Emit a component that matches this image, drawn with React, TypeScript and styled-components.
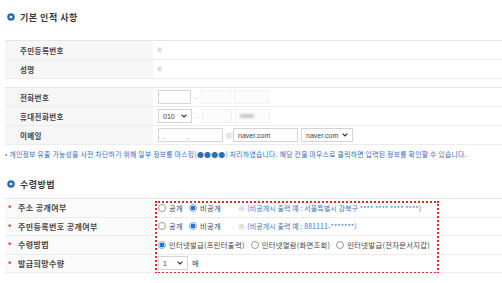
import styled, { createGlobalStyle } from 'styled-components';

const Global = createGlobalStyle`
  body {
    margin: 0;
    background: #ffffff;
    font-family: "Noto Sans CJK KR", "Noto Sans", sans-serif;
    color: #333333;
  }
`;

const Page = styled.div`
  padding: 10px 0 0 5px;
`;

const Heading = styled.h2<{ mt?: number }>`
  display: flex;
  align-items: center;
  gap: 5px;
  height: 14px;
  margin: ${(p) => p.mt || 0}px 0 0 2px;
  font-size: 9px;
  font-weight: 700;
  color: #3a3a3a;
  letter-spacing: 0.5px;
`;

const Table = styled.div<{ mt: number }>`
  position: relative;
  margin-top: ${(p) => p.mt}px;
  border-top: 1px solid #e6e6e6;
`;

const Row = styled.div<{ h: number }>`
  display: grid;
  grid-template-columns: 148px 1fr;
  height: ${(p) => p.h}px;
`;

const Label = styled.div<{ bg?: string; strong?: boolean }>`
  display: flex;
  align-items: center;
  gap: 5px;
  padding-left: ${(p) => (p.strong ? 2 : 15)}px;
  background: ${(p) => p.bg || '#f6f6f6'};
  border-bottom: 1px solid #ececec;
  font-size: ${(p) => (p.strong ? 8 : 7.5)}px;
  font-weight: ${(p) => (p.strong ? 700 : 600)};
  color: #444444;
  letter-spacing: 0.4px;
`;

const Star = styled.span`
  color: #e0342c;
  font-size: 8px;
  width: 6px;
  text-align: center;
`;

const Value = styled.div<{ gap?: number }>`
  display: flex;
  align-items: center;
  gap: ${(p) => p.gap ?? 4}px;
  padding-left: 5px;
  border-bottom: 1px solid #ececec;
  font-size: 7.3px;
  letter-spacing: 0.3px;
  color: #444444;
`;

const Input = styled.div<{ w: number; faint?: boolean }>`
  box-sizing: border-box;
  display: flex;
  align-items: center;
  width: ${(p) => p.w}px;
  height: 14px;
  padding: 0 4px;
  border: 1px solid ${(p) => (p.faint ? '#f1f1f1' : '#d4d4d4')};
  background: ${(p) => (p.faint ? '#fcfcfc' : '#ffffff')};
  font-family: "Liberation Sans", Arial, sans-serif;
  font-size: 7px;
  letter-spacing: 0;
  color: #444444;
`;

const Select = styled(Input)`
  justify-content: space-between;
`;

const Dash = styled.span`
  color: #bbbbbb;
  font-size: 7px;
  width: 4px;
  text-align: center;
`;

const Blur = styled.span<{ w: number }>`
  display: inline-block;
  width: ${(p) => p.w}px;
  height: 4px;
  background: #c9c9c9;
  filter: blur(1px);
`;

const Notice = styled.p`
  margin: 5px 0 0;
  font-size: 6.8px;
  line-height: 9px;
  color: #2f6db5;
  letter-spacing: 0.3px;
  white-space: nowrap;
`;

const Radio = styled.span<{ on?: boolean }>`
  box-sizing: border-box;
  display: inline-block;
  width: 8px;
  height: 8px;
  border-radius: 50%;
  border: 1px solid ${(p) => (p.on ? '#7aa9df' : '#9a9a9a')};
  background: ${(p) => (p.on ? 'radial-gradient(circle, #2d72c8 0 2.3px, #ffffff 2.6px)' : '#ffffff')};
  margin-right: 3px;
`;

const Option = styled.label`
  display: inline-flex;
  align-items: center;
  margin-right: 6px;
`;

const Hint = styled.span`
  margin-left: 11px;
  color: #3b78bd;
  font-size: 7px;
  letter-spacing: 0.1px;
  white-space: nowrap;
  & b {
    color: #a8a8a8;
    font-weight: 400;
    margin-right: 2px;
  }
`;

const Marker = styled.div`
  position: absolute;
  left: 150px;
  top: 2px;
  width: 284px;
  height: 73px;
  box-sizing: border-box;
  border: 2px dotted #e3262b;
  pointer-events: none;
`;

const Dot = () => (
  <svg width="8" height="8" viewBox="0 0 8 8">
    <circle cx="4" cy="4" r="3.8" fill="#2b6cb8" />
    <circle cx="4" cy="4" r="1.3" fill="#ffffff" />
  </svg>
);

const Chevron = () => (
  <svg width="6" height="4" viewBox="0 0 6 4">
    <path d="M0.6 0.6 L3 3 L5.4 0.6" stroke="#333" strokeWidth="1.2" fill="none" />
  </svg>
);

const App = (): JSX.Element => (
  <Page>
    <Global />
    <Heading><Dot /> 기본 인적 사항</Heading>

    <Table mt={16}>
      <Row h={19}>
        <Label>주민등록번호</Label>
        <Value><Blur w={3} /></Value>
      </Row>
      <Row h={19}>
        <Label>성명</Label>
        <Value><Blur w={3} /></Value>
      </Row>
    </Table>

    <Table mt={8}>
      <Row h={19}>
        <Label>전화번호</Label>
        <Value gap={3}>
          <Input w={33} />
          <Dash>-</Dash>
          <Input w={30} faint />
          <Input w={35} faint />
        </Value>
      </Row>
      <Row h={19}>
        <Label>휴대전화번호</Label>
        <Value gap={3}>
          <Select w={34}>010 <Chevron /></Select>
          <Dash>-</Dash>
          <Input w={30} faint />
          <Input w={35} faint><Blur w={14} /></Input>
        </Value>
      </Row>
      <Row h={19}>
        <Label>이메일</Label>
        <Value gap={3}>
          <Input w={65}>ˏ&nbsp;&nbsp;&nbsp;&nbsp;&nbsp;&nbsp;&nbsp;&nbsp;&nbsp;&nbsp;&nbsp;ˎ</Input>
          <Dash>@</Dash>
          <Input w={65}>naver.com</Input>
          <Select w={52}>naver.com <Chevron /></Select>
        </Value>
      </Row>
    </Table>

    <Notice>
      • 개인정보 유출 가능성을 사전 차단하기 위해 일부 정보를 마스킹(●●●●) 처리하였습니다. 해당 칸을 마우스로 클릭하면 입력된 정보를 확인할 수 있습니다.
    </Notice>

    <Heading mt={18}><Dot /> 수령방법</Heading>

    <Table mt={7}>
      <Row h={18.5}>
        <Label strong bg="#fafafa"><Star>*</Star>주소 공개여부</Label>
        <Value gap={0}>
          <Option><Radio />공개</Option>
          <Option><Radio on />비공개</Option>
          <Hint><b>※</b>(비공개시 출력 예 : 서울특별시 강북구 **** **** **** ****)</Hint>
        </Value>
      </Row>
      <Row h={18.5}>
        <Label strong bg="#fafafa"><Star>*</Star>주민등록번호 공개여부</Label>
        <Value gap={0}>
          <Option><Radio />공개</Option>
          <Option><Radio on />비공개</Option>
          <Hint><b>※</b>(비공개시 출력 예 : 881111-*******)</Hint>
        </Value>
      </Row>
      <Row h={18.5}>
        <Label strong bg="#fafafa"><Star>*</Star>수령방법</Label>
        <Value gap={0}>
          <Option><Radio on />인터넷발급(프린터출력)</Option>
          <Option><Radio />인터넷열람(화면조회)</Option>
          <Option><Radio />인터넷발급(전자문서지갑)</Option>
        </Value>
      </Row>
      <Row h={18.5}>
        <Label strong bg="#fafafa"><Star>*</Star>발급희망수량</Label>
        <Value>
          <Select w={30}>1 <Chevron /></Select>
          매
        </Value>
      </Row>
      <Marker />
    </Table>
  </Page>
);

export default App;
